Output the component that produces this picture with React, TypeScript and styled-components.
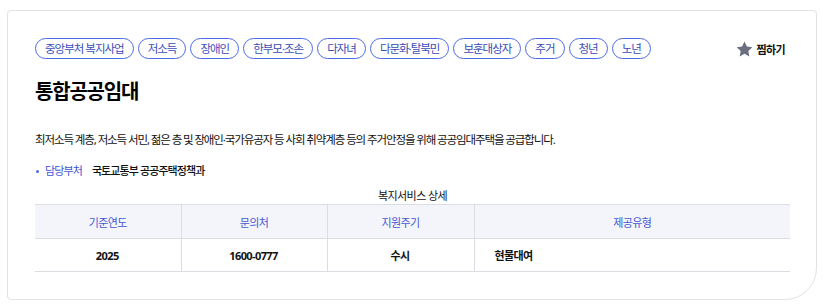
import React from "react";
import styled, { createGlobalStyle } from "styled-components";

const Global = createGlobalStyle`
  html, body { margin: 0; padding: 0; background: #fff; }
  body { font-family: "Noto Sans", "Noto Sans CJK KR", sans-serif; color: #111; }
  * { box-sizing: border-box; }
`;

const Card = styled.section`
  margin: 10px 0 0 7px;
  width: 810px;
  height: 290px;
  border: 1px solid #e2e2e2;
  border-radius: 4px 4px 32px 4px;
  padding: 27px 26px 0 27px;
  position: relative;
`;

const TopRow = styled.div`
  display: flex;
  justify-content: space-between;
  align-items: center;
  height: 21px;
`;

const Tags = styled.ul`
  display: flex;
  gap: 4px;
  list-style: none;
  margin: 0;
  padding: 0;
`;

const Tag = styled.li`
  height: 21px;
  padding: 0 9px;
  border: 1px solid #4c6ae8;
  border-radius: 11px;
  font-size: 11.5px;
  line-height: 19px;
  color: #3a4db8;
  letter-spacing: -1px;
  white-space: nowrap;
`;

const Fav = styled.button`
  display: flex;
  align-items: center;
  gap: 3px;
  background: none;
  border: 0;
  padding: 0;
  margin-right: 5px;
  font-family: inherit;
  font-size: 11px;
  font-weight: 700;
  color: #111;
  letter-spacing: -0.6px;
`;

const Title = styled.h2`
  margin: 19px 0 0 0;
  font-size: 20px;
  font-weight: 700;
  line-height: 28px;
  letter-spacing: -1.2px;
  color: #000;
`;

const Desc = styled.p`
  margin: 25px 0 0 0;
  font-size: 11.5px;
  line-height: 18px;
  letter-spacing: -1.1px;
  color: #111;
`;

const InfoRow = styled.div`
  display: flex;
  align-items: center;
  margin-top: 14px;
  font-size: 11px;
  line-height: 16px;
  letter-spacing: -0.9px;
  padding-left: 1px;
`;

const Bullet = styled.span`
  width: 3px;
  height: 3px;
  border-radius: 50%;
  background: #4c6ae8;
  margin-right: 6px;
`;

const InfoLabel = styled.span`
  color: #3d55d6;
  margin-right: 10px;
`;

const InfoValue = styled.span`
  color: #111;
  font-weight: 500;
`;

const Table = styled.table`
  margin-top: 10px;
  width: 755px;
  border-collapse: collapse;
  font-size: 11px;
  letter-spacing: -0.6px;
`;

const Caption = styled.caption`
  font-size: 11px;
  line-height: 14px;
  color: #111;
  padding-bottom: 1px;
`;

const Th = styled.th<{ $w?: number }>`
  width: ${(p) => (p.$w ? `${p.$w}px` : "auto")};
  height: 34px;
  background: #f4f5fa;
  border-top: 1px solid #dcdde3;
  border-bottom: 1px solid #dcdde3;
  font-weight: 400;
  color: #4657d4;
  text-align: center;
  & + & { border-left: 1px solid #dcdde3; }
`;

const Td = styled.td<{ $left?: boolean }>`
  height: 33px;
  border-bottom: 1px solid #dcdde3;
  font-weight: 700;
  color: #111;
  text-align: ${(p) => (p.$left ? "left" : "center")};
  padding-left: ${(p) => (p.$left ? "20px" : "0")};
  & + & { border-left: 1px solid #dcdde3; }
`;

const tags = [
  "중앙부처 복지사업",
  "저소득",
  "장애인",
  "한부모·조손",
  "다자녀",
  "다문화·탈북민",
  "보훈대상자",
  "주거",
  "청년",
  "노년",
];

export default function App() {
  return (
    <>
      <Global />
      <Card>
        <TopRow>
          <Tags>
            {tags.map((t) => (
              <Tag key={t}>{t}</Tag>
            ))}
          </Tags>
          <Fav type="button">
            <svg width="17" height="16" viewBox="0 0 24 23">
              <path
                d="M12 0.8l3.4 7.2 7.8 1-5.7 5.4 1.5 7.8L12 18.4l-7 3.8 1.5-7.8L0.8 9l7.8-1z"
                fill="#6b6e80"
              />
            </svg>
            찜하기
          </Fav>
        </TopRow>
        <Title>통합공공임대</Title>
        <Desc>
          최저소득 계층, 저소득 서민, 젊은 층 및 장애인·국가유공자 등 사회 취약계층 등의 주거안정을 위해 공공임대주택을 공급합니다.
        </Desc>
        <InfoRow>
          <Bullet />
          <InfoLabel>담당부처</InfoLabel>
          <InfoValue>국토교통부 공공주택정책과</InfoValue>
        </InfoRow>
        <Table>
          <Caption>복지서비스 상세</Caption>
          <thead>
            <tr>
              <Th $w={146}>기준연도</Th>
              <Th $w={146}>문의처</Th>
              <Th $w={147}>지원주기</Th>
              <Th>제공유형</Th>
            </tr>
          </thead>
          <tbody>
            <tr>
              <Td>2025</Td>
              <Td>1600-0777</Td>
              <Td>수시</Td>
              <Td $left>현물대여</Td>
            </tr>
          </tbody>
        </Table>
      </Card>
    </>
  );
}
